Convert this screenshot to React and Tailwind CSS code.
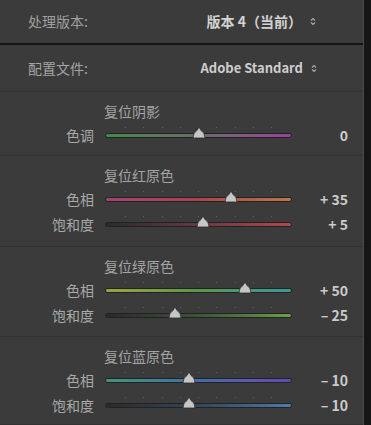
import React from 'react';

const font = { fontFamily: '"Noto Sans CJK SC", "Noto Sans", sans-serif' };

const sections = [
  {
    title: '复位阴影',
    h: 'h-[64px]',
    rows: [
      { label: '色调', value: 0, text: '0', track: 'bg-gradient-to-r from-[#3f8a48] via-[#6a6a6a] to-[#983f9c]' },
    ],
  },
  {
    title: '复位红原色',
    h: 'h-[91px]',
    rows: [
      { label: '色相', value: 35, text: '+ 35', track: 'bg-gradient-to-r from-[#a54276] via-[#a9444c] to-[#b7784a]' },
      { label: '饱和度', value: 5, text: '+ 5', track: 'bg-gradient-to-r from-[#2a2a2a] via-[#653a40] to-[#b8434f]' },
    ],
  },
  {
    title: '复位绿原色',
    h: 'h-[90px]',
    rows: [
      { label: '色相', value: 50, text: '+ 50', track: 'bg-gradient-to-r from-[#9aa63c] via-[#589648] to-[#3a9898]' },
      { label: '饱和度', value: -25, text: '– 25', track: 'bg-gradient-to-r from-[#2a2a2a] via-[#3c5536] to-[#69a046]' },
    ],
  },
  {
    title: '复位蓝原色',
    h: 'flex-1',
    rows: [
      { label: '色相', value: -10, text: '– 10', track: 'bg-gradient-to-r from-[#40967a] via-[#436ca8] to-[#6646b8]' },
      { label: '饱和度', value: -10, text: '– 10', track: 'bg-gradient-to-r from-[#2a2a2a] via-[#35475a] to-[#4b7ca8]' },
    ],
  },
];

const Updown = () => (
  <svg width="6" height="9" viewBox="0 0 6 9" className="ml-[8px]">
    <path d="M1 3.5 L3 1.5 L5 3.5" stroke="#a8a8a8" strokeWidth="1.2" fill="none" />
    <path d="M1 5.5 L3 7.5 L5 5.5" stroke="#a8a8a8" strokeWidth="1.2" fill="none" />
  </svg>
);

const Thumb = ({ value }) => {
  const pct = ((value + 100) / 200) * 100;
  return (
    <div className="absolute top-[-7px] -translate-x-1/2" style={{ left: `${pct}%` }}>
      <svg width="14" height="13" viewBox="0 0 14 13">
        <path d="M1 12 Q1 6.5 5 4.5 L7 1 L9 4.5 Q13 6.5 13 12 Z" fill="#c6c6c6" stroke="#2c2c2c" strokeWidth="0.8" />
      </svg>
    </div>
  );
};

const Slider = ({ row }) => (
  <div className="flex h-[25px] items-center">
    <div className="w-[94px] text-right text-[14px] text-[#a9a9a9]">{row.label}</div>
    <div className="relative ml-[11px] w-[187px]">
      <div className="absolute top-[-6px] left-0 right-0 flex justify-between px-[20px]">
        {[0, 1, 2, 3, 4, 5, 6, 7, 8].map((i) => (
          <span key={i} className="h-[1px] w-[1px] bg-[#5e5e5e]" />
        ))}
      </div>
      <div className={`h-[5px] rounded-full border border-[#222] ${row.track}`} />
      <Thumb value={row.value} />
    </div>
    <div className="w-[56px] text-right text-[14px] font-bold text-[#cbcbcb]">{row.text}</div>
  </div>
);

export default function App() {
  return (
    <div className="flex h-[425px] w-[371px] bg-[#161616]" style={font}>
      <div className="flex w-[364px] flex-col bg-[#3b3b3b] border-r border-[#4b4b4b]">
        <div className="flex h-[45px] items-center border-b-2 border-[#141414] pl-[28px] pr-[47px]">
          <span className="text-[14px] text-[#9f9f9f]">处理版本:</span>
          <span className="ml-auto text-[14px] font-bold text-[#d2d2d2]">版本 4（当前）</span>
          <Updown />
        </div>
        <div className="flex h-[47px] items-center border-b border-[#323232] pl-[28px] pr-[46px]">
          <span className="text-[14px] text-[#a4a4a4]">配置文件:</span>
          <span className="ml-auto text-[13px] font-bold text-[#cdcdcd]">Adobe Standard</span>
          <Updown />
        </div>
        {sections.map((s) => (
          <div key={s.title} className={`${s.h} border-b border-[#323232] pt-[7px]`}>
            <div className="flex h-[24px] items-center pl-[104px] text-[14px] text-[#a4a4a4]">{s.title}</div>
            {s.rows.map((r) => (
              <Slider key={r.label} row={r} />
            ))}
          </div>
        ))}
      </div>
    </div>
  );
}
